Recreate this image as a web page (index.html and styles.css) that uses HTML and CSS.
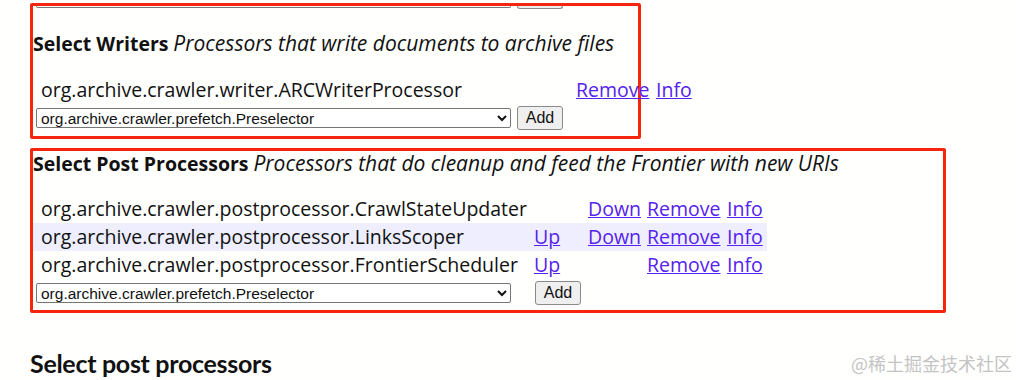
FILE: index.html
```html
<!DOCTYPE html>
<html lang="en">
<head>
    <meta charset="UTF-8">
    <title>Processors</title>
    <link rel="stylesheet" href="styles.css">
</head>
<body>
    <div class="page">
        <div class="box box-writers">
            <div class="stub">
                <span class="stub-select"></span>
                <span class="stub-button"></span>
            </div>
            <h3 class="section"><b>Select Writers</b> <i>Processors that write documents to archive files</i></h3>
            <div class="row row-writers">
                <span class="name">org.archive.crawler.writer.ARCWriterProcessor</span>
                <a href="#">Remove</a>
                <a href="#">Info</a>
            </div>
            <div class="adder">
                <select class="picker"><option>org.archive.crawler.prefetch.Preselector</option></select>
                <button class="add">Add</button>
            </div>
        </div>

        <div class="box box-post">
            <h3 class="section"><b>Select Post Processors</b> <i>Processors that do cleanup and feed the Frontier with new URIs</i></h3>
            <div class="rows">
                <div class="row row-post">
                    <span class="name">org.archive.crawler.postprocessor.CrawlStateUpdater</span>
                    <span></span>
                    <a href="#">Down</a>
                    <a href="#">Remove</a>
                    <a href="#">Info</a>
                </div>
                <div class="row row-post alt">
                    <span class="name">org.archive.crawler.postprocessor.LinksScoper</span>
                    <a href="#">Up</a>
                    <a href="#">Down</a>
                    <a href="#">Remove</a>
                    <a href="#">Info</a>
                </div>
                <div class="row row-post">
                    <span class="name">org.archive.crawler.postprocessor.FrontierScheduler</span>
                    <a href="#">Up</a>
                    <span></span>
                    <a href="#">Remove</a>
                    <a href="#">Info</a>
                </div>
            </div>
            <div class="adder adder-post">
                <select class="picker"><option>org.archive.crawler.prefetch.Preselector</option></select>
                <button class="add">Add</button>
            </div>
        </div>

        <div class="footer">
            <h2>Select post processors</h2>
            <span class="mark">@稀土掘金技术社区</span>
        </div>
    </div>
</body>
</html>
```

FILE: styles.css
```css
body {
    margin: 0;
    background: #fffffd;
    color: #111;
    font-family: 'Open Sans', sans-serif;
}
.page {
    padding: 3px 0 0 30px;
}
.box {
    border: 3px solid #f6260e;
    border-radius: 2px;
}
.box-writers {
    width: 605px;
    height: 130px;
}
.box-post {
    width: 910px;
    height: 159px;
    margin-top: 9px;
}
.stub {
    display: flex;
    align-items: flex-start;
    gap: 6px;
    height: 3px;
    padding-left: 3px;
}
.stub-select {
    width: 473px;
    height: 1px;
    border: 1px solid #767676;
    border-top: none;
    border-radius: 0 0 2px 2px;
}
.stub-button {
    width: 44px;
    height: 2px;
    border: 1px solid #8a8a8a;
    border-top: none;
    border-radius: 0 0 3px 3px;
    background: #efefef;
}
.section {
    margin: 0;
    font-weight: normal;
    line-height: 24px;
    white-space: nowrap;
}
.box-writers .section {
    margin-top: 22px;
}
.section b {
    font-size: 19.5px;
    font-weight: 700;
}
.section i {
    font-size: 21px;
}
.row {
    display: grid;
    align-items: center;
    height: 28px;
    padding-left: 8px;
    font-size: 19.5px;
    white-space: nowrap;
}
.row-writers {
    grid-template-columns: 535px 80px 40px;
    margin-top: 19px;
}
.rows {
    margin-top: 19px;
}
.row-post {
    grid-template-columns: 493px 54px 59px 80px 40px;
    width: 726px;
    line-height: 26px;
}
.row-post.alt {
    background: #eeeeff;
}
a {
    color: #5522ee;
}
.adder {
    display: flex;
    align-items: center;
    gap: 6px;
    margin-top: 3px;
    padding-left: 3px;
}
.adder-post {
    gap: 24px;
    margin-top: 2px;
}
.picker {
    width: 475px;
    height: 20px;
    font-family: 'Liberation Sans', Arial, sans-serif;
    font-size: 15.5px;
    border: 1px solid #767676;
    border-radius: 2px;
    background: #fff;
    color: #111;
    padding: 0;
}
.add {
    width: 46px;
    height: 24px;
    font-family: 'Liberation Sans', Arial, sans-serif;
    font-size: 16px;
    border: 1px solid #8a8a8a;
    border-radius: 3px;
    background: #efefef;
    color: #111;
    padding: 0;
}
.footer {
    display: flex;
    justify-content: space-between;
    align-items: center;
    margin-top: 35px;
    padding-right: 4px;
}
.footer h2 {
    margin: 0;
    font-family: 'Lato', sans-serif;
    font-size: 25px;
    line-height: 30px;
    font-weight: 700;
    letter-spacing: -0.3px;
}
.mark {
    font-family: 'Noto Sans CJK SC', sans-serif;
    font-size: 18px;
    color: #c4c4c4;
}
```
